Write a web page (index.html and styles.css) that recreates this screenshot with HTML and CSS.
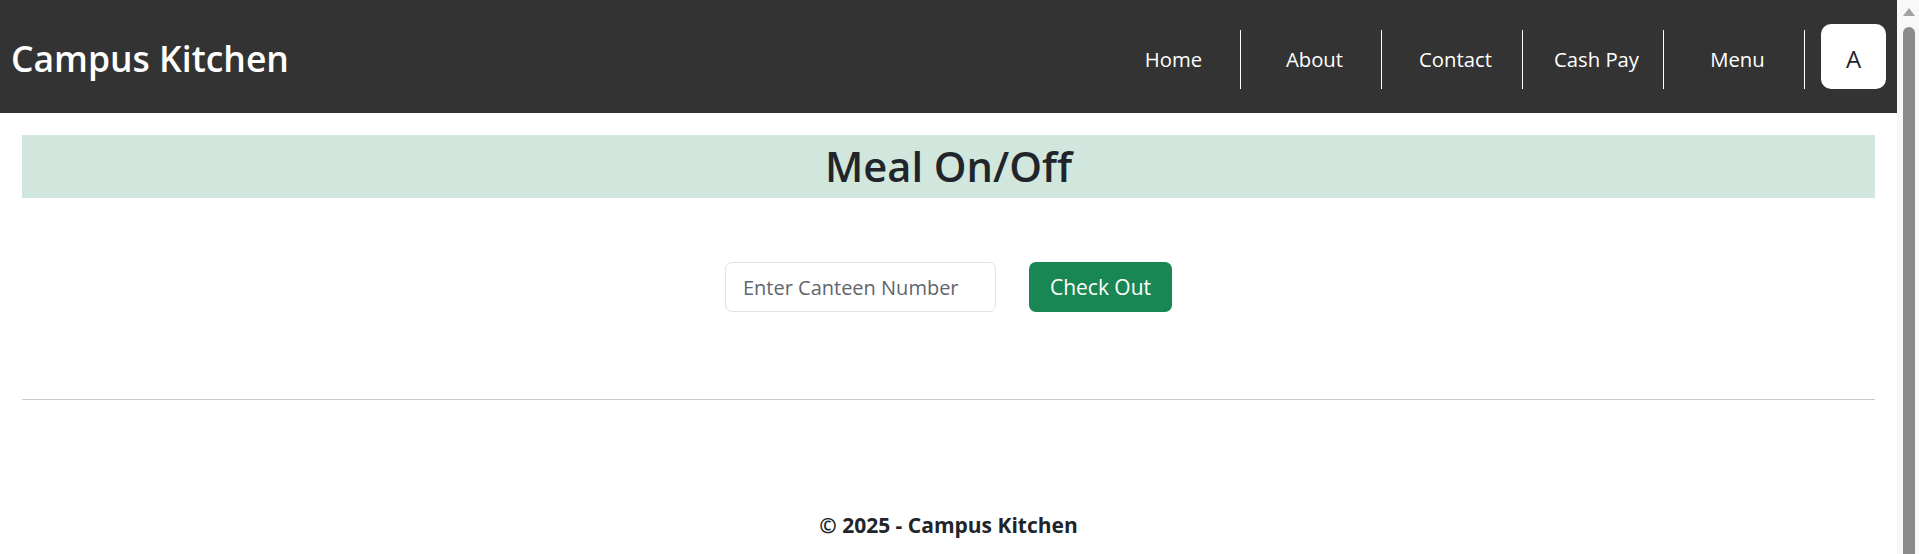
FILE: index.html
```html
<!DOCTYPE html>
<html lang="en">
<head>
<meta charset="utf-8">
<title>Meal On/Off - Campus Kitchen</title>
<link rel="stylesheet" href="styles.css">
</head>
<body>
<div class="window">
  <div class="page">
    <header class="navbar">
      <a class="brand" href="#">Campus Kitchen</a>
      <nav class="nav">
        <ul class="nav-links">
          <li><a href="#">Home</a></li>
          <li><a href="#">About</a></li>
          <li><a href="#">Contact</a></li>
          <li><a href="#">Cash Pay</a></li>
          <li><a href="#">Menu</a></li>
        </ul>
        <button class="avatar" type="button">A</button>
      </nav>
    </header>
    <main class="content">
      <h1 class="title">Meal On/Off</h1>
      <form class="checkout">
        <input class="field" type="text" placeholder="Enter Canteen Number">
        <button class="btn-success" type="button">Check Out</button>
      </form>
      <hr class="divider">
      <footer class="footer">© 2025 - Campus Kitchen</footer>
    </main>
  </div>
  <div class="scrollbar">
    <span class="arrow"></span>
    <span class="thumb"></span>
  </div>
</div>
</body>
</html>
```
FILE: styles.css
```css
* { box-sizing: border-box; }
html, body {
  margin: 0;
  height: 554px;
  overflow: hidden;
}
body {
  font-family: "Open Sans", "Noto Sans", sans-serif;
  color: #212529;
  background: #fff;
}
.window {
  display: flex;
  height: 554px;
}
.page {
  flex: 1;
  min-width: 0;
}
.navbar {
  height: 113px;
  background: #333333;
  display: flex;
  align-items: center;
  justify-content: space-between;
  padding: 0 11px 0 11px;
}
.brand {
  color: #fff;
  text-decoration: none;
  font-weight: 600;
  font-size: 35.5px;
  padding-top: 2px;
}
.nav {
  display: flex;
  align-items: center;
}
.nav-links {
  list-style: none;
  margin: 5px 0 0 0;
  padding: 0;
  display: flex;
}
.nav-links li a {
  display: flex;
  align-items: center;
  justify-content: center;
  width: 141px;
  height: 59px;
  padding-left: 7px;
  border-right: 1px solid #fff;
  color: #fff;
  text-decoration: none;
  font-size: 20.3px;
}
.avatar {
  margin-left: 16px;
  width: 65px;
  height: 65px;
  border: 0;
  border-radius: 10px;
  background: #fff;
  color: #212529;
  font-family: "Open Sans", "Noto Sans", sans-serif;
  font-size: 24px;
  padding: 3px 0 0 0;
}
.content {
  padding: 22px 22px 0 22px;
}
.title {
  margin: 0;
  height: 63px;
  line-height: 63px;
  background: #d1e7dd;
  text-align: center;
  font-size: 41.6px;
  font-weight: 600;
}
.checkout {
  display: flex;
  justify-content: center;
  gap: 33px;
  margin: 64px 0 0 0;
}
.field {
  width: 271px;
  height: 50px;
  border: 1px solid #dee2e6;
  border-radius: 7px;
  padding: 0 17px;
  font-family: "Open Sans", "Noto Sans", sans-serif;
  font-size: 20px;
  color: #212529;
}
.field::placeholder {
  color: #5f666d;
}
.btn-success {
  height: 50px;
  padding: 0 21px;
  border: 0;
  border-radius: 7px;
  background: #198754;
  color: #fff;
  font-family: "Open Sans", "Noto Sans", sans-serif;
  font-size: 21px;
}
.divider {
  margin: 87px 0 0 0;
  border: 0;
  border-top: 1px solid #c8c9ca;
}
.footer {
  margin-top: 111px;
  text-align: center;
  font-weight: 700;
  font-size: 21px;
}
.scrollbar {
  width: 22px;
  background: #f8f8f8;
  display: flex;
  flex-direction: column;
  align-items: center;
  padding: 8px 0 0 2px;
}
.arrow {
  width: 0;
  height: 0;
  border-left: 6px solid transparent;
  border-right: 6px solid transparent;
  border-bottom: 8px solid #a3a3a3;
}
.thumb {
  margin-top: 11px;
  width: 12px;
  flex: 1;
  background: #8b8b8b;
  border-radius: 6px 6px 0 0;
}
```
